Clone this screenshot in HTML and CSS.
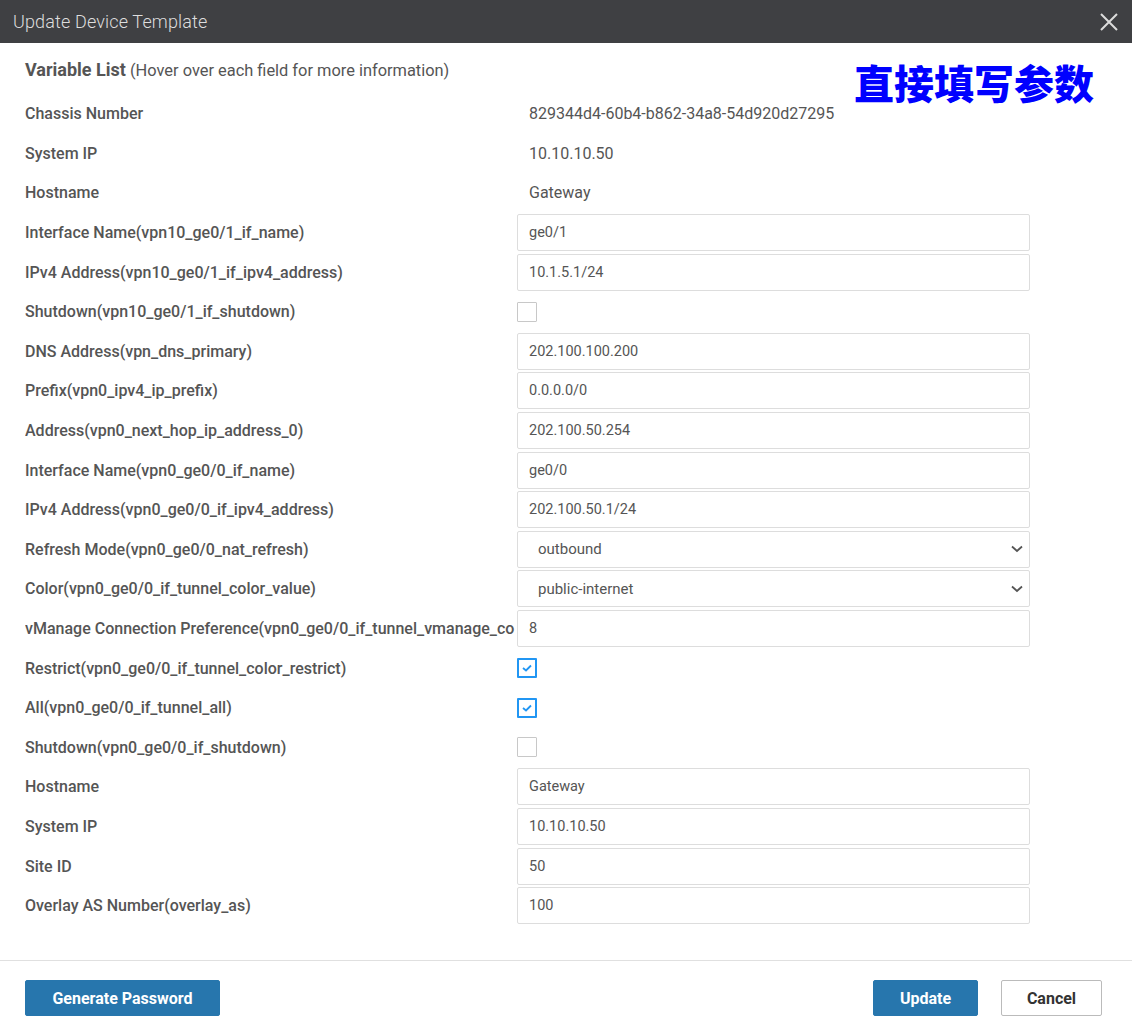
FILE: index.html
```html
<!DOCTYPE html>
<html lang="en">
<head>
<meta charset="utf-8">
<title>Update Device Template</title>
<link rel="stylesheet" href="styles.css">
</head>
<body>
<div class="modal">
  <div class="modal-header">
    <span class="modal-title">Update Device Template</span>
    <button class="close-btn" aria-label="Close">
      <svg width="18" height="18" viewBox="0 0 18 18"><path d="M1 1 L17 17 M17 1 L1 17" stroke="#dcdcdc" stroke-width="2" fill="none"/></svg>
    </button>
  </div>
  <div class="modal-body">
    <div class="annotation">直接填写参数</div>
    <div class="heading"><b>Variable List</b> (Hover over each field for more information)</div>
    <div class="grid">
      <div class="label">Chassis Number</div><div class="value">829344d4-60b4-b862-34a8-54d920d27295</div>
      <div class="label">System IP</div><div class="value">10.10.10.50</div>
      <div class="label">Hostname</div><div class="value">Gateway</div>
      <div class="label">Interface Name(vpn10_ge0/1_if_name)</div><div><input class="field" value="ge0/1"></div>
      <div class="label">IPv4 Address(vpn10_ge0/1_if_ipv4_address)</div><div><input class="field" value="10.1.5.1/24"></div>
      <div class="label">Shutdown(vpn10_ge0/1_if_shutdown)</div><div><span class="check"></span></div>
      <div class="label">DNS Address(vpn_dns_primary)</div><div><input class="field" value="202.100.100.200"></div>
      <div class="label">Prefix(vpn0_ipv4_ip_prefix)</div><div><input class="field" value="0.0.0.0/0"></div>
      <div class="label">Address(vpn0_next_hop_ip_address_0)</div><div><input class="field" value="202.100.50.254"></div>
      <div class="label">Interface Name(vpn0_ge0/0_if_name)</div><div><input class="field" value="ge0/0"></div>
      <div class="label">IPv4 Address(vpn0_ge0/0_if_ipv4_address)</div><div><input class="field" value="202.100.50.1/24"></div>
      <div class="label">Refresh Mode(vpn0_ge0/0_nat_refresh)</div>
      <div class="select"><span>outbound</span><svg width="12" height="8" viewBox="0 0 12 8"><path d="M1 1.5 L6 6 L11 1.5" stroke="#555" stroke-width="1.8" fill="none"/></svg></div>
      <div class="label">Color(vpn0_ge0/0_if_tunnel_color_value)</div>
      <div class="select"><span>public-internet</span><svg width="12" height="8" viewBox="0 0 12 8"><path d="M1 1.5 L6 6 L11 1.5" stroke="#555" stroke-width="1.8" fill="none"/></svg></div>
      <div class="label" title="vManage Connection Preference(vpn0_ge0/0_if_tunnel_vmanage_connection_preference)">vManage Connection Preference(vpn0_ge0/0_if_tunnel_vmanage_co</div><div><input class="field" value="8"></div>
      <div class="label">Restrict(vpn0_ge0/0_if_tunnel_color_restrict)</div><div><span class="check on"><svg width="12" height="10" viewBox="0 0 12 10"><path d="M2 5 L5 7.5 L10 2.5" stroke="#2196f3" stroke-width="1.8" fill="none"/></svg></span></div>
      <div class="label">All(vpn0_ge0/0_if_tunnel_all)</div><div><span class="check on"><svg width="12" height="10" viewBox="0 0 12 10"><path d="M2 5 L5 7.5 L10 2.5" stroke="#2196f3" stroke-width="1.8" fill="none"/></svg></span></div>
      <div class="label">Shutdown(vpn0_ge0/0_if_shutdown)</div><div><span class="check"></span></div>
      <div class="label">Hostname</div><div><input class="field" value="Gateway"></div>
      <div class="label">System IP</div><div><input class="field" value="10.10.10.50"></div>
      <div class="label">Site ID</div><div><input class="field" value="50"></div>
      <div class="label">Overlay AS Number(overlay_as)</div><div><input class="field" value="100"></div>
    </div>
  </div>
  <div class="modal-footer">
    <button class="btn primary wide">Generate Password</button>
    <div class="spacer"></div>
    <button class="btn primary update">Update</button>
    <button class="btn secondary">Cancel</button>
  </div>
</div>
</body>
</html>
```

FILE: styles.css
```css
* { box-sizing: border-box; }
html, body { margin: 0; padding: 0; background: #fff; }
body {
  font-family: Roboto, "Liberation Sans", sans-serif;
  color: #555;
  font-size: 16px;
}
.modal {
  width: 1132px;
  height: 1035px;
  display: flex;
  flex-direction: column;
  background: #fff;
}
.modal-header {
  height: 43px;
  background: #3f4043;
  display: flex;
  align-items: center;
  justify-content: space-between;
  padding: 0 12px 0 13px;
  flex: none;
}
.modal-title {
  color: #dedede;
  font-size: 18px;
  font-weight: 300;
  letter-spacing: 0.15px;
}
.close-btn {
  background: none;
  border: 0;
  padding: 0;
  width: 20px;
  height: 20px;
  display: flex;
  align-items: center;
  justify-content: center;
  margin-right: 1px;
}
.modal-body {
  position: relative;
  padding: 17px 0 35px 25px;
  flex: 1;
}
.annotation {
  position: absolute;
  left: 854px;
  top: 15px;
  font-family: "Noto Sans CJK SC", sans-serif;
  font-weight: 900;
  font-size: 40px;
  line-height: 48px;
  color: #0000ff;
}
.heading {
  height: 20px;
  line-height: 20px;
  font-size: 16.4px;
  color: #555;
  margin-bottom: 14px;
  white-space: nowrap;
}
.heading b {
  font-size: 18px;
  font-weight: 700;
  color: #555;
}
.grid {
  display: grid;
  grid-template-columns: 492px 513px;
  grid-auto-rows: 39.6px;
  align-items: center;
}
.label {
  font-weight: 500;
  font-size: 16px;
  color: #555;
  white-space: nowrap;
  overflow: hidden;
}
.value {
  padding-left: 12px;
  font-size: 16px;
  color: #555;
}
.field {
  display: block;
  width: 513px;
  height: 37px;
  border: 1px solid #ddd;
  border-radius: 2px;
  padding: 0 11px;
  font-family: Roboto, "Liberation Sans", sans-serif;
  font-size: 14.5px;
  color: #555;
  background: #fff;
  outline: none;
}
.select {
  width: 513px;
  height: 37px;
  border: 1px solid #ddd;
  border-radius: 2px;
  padding: 0 4px 0 20px;
  display: flex;
  align-items: center;
  justify-content: space-between;
  font-size: 15px;
  color: #555;
}
.select svg { margin-right: 2px; }
.check {
  display: flex;
  align-items: center;
  justify-content: center;
  width: 20px;
  height: 20px;
  border: 1px solid #c8c8c8;
  border-radius: 1px;
  background: #fff;
}
.check.on {
  border: 2px solid #2196f3;
}
.modal-footer {
  flex: none;
  height: 75px;
  border-top: 1px solid #e0e0e0;
  display: flex;
  align-items: flex-start;
  padding: 19px 30px 0 25px;
}
.spacer { flex: 1; }
.btn {
  height: 36px;
  border-radius: 2px;
  font-family: Roboto, "Liberation Sans", sans-serif;
  font-size: 16px;
  font-weight: 700;
  cursor: pointer;
  padding: 0;
}
.primary {
  background: #2776ad;
  color: #fff;
  border: 1px solid #2776ad;
}
.wide { width: 195px; }
.update { width: 105px; margin-right: 23px; }
.secondary {
  width: 101px;
  background: #fff;
  color: #333;
  border: 1px solid #bbb;
}
```
